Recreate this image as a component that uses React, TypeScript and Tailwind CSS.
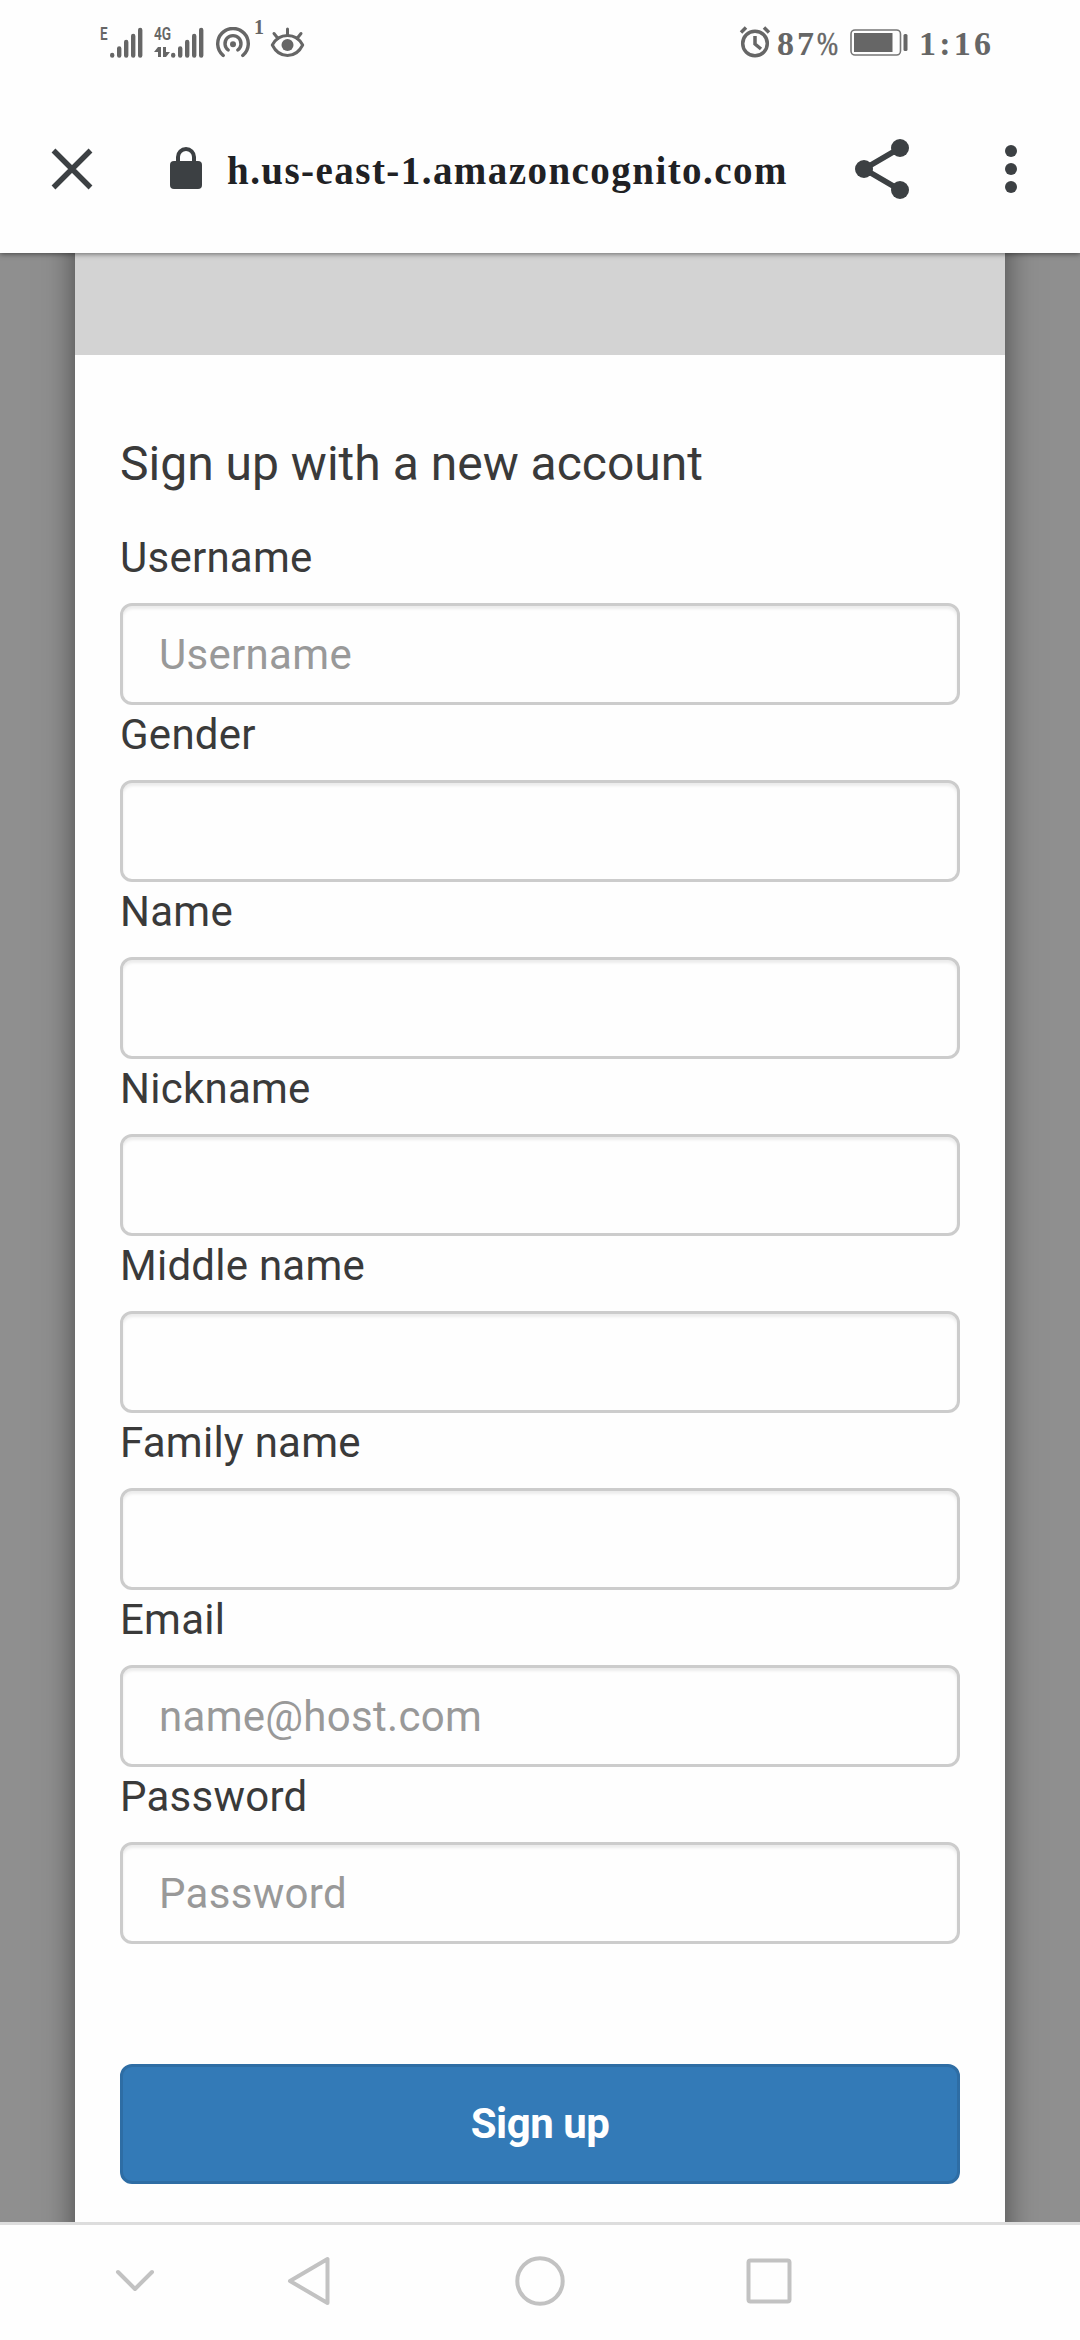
import React from "react";

const fields = [
  { label: "Username", placeholder: "Username", type: "text" },
  { label: "Gender", placeholder: "", type: "text" },
  { label: "Name", placeholder: "", type: "text" },
  { label: "Nickname", placeholder: "", type: "text" },
  { label: "Middle name", placeholder: "", type: "text" },
  { label: "Family name", placeholder: "", type: "text" },
  { label: "Email", placeholder: "name@host.com", type: "email" },
  { label: "Password", placeholder: "Password", type: "password" },
];

function SignalBars() {
  return (
    <svg width="33" height="31" viewBox="0 0 33 31" className="block" stroke="#666" strokeWidth="4.4" strokeLinecap="round">
      <path d="M2.2 28v.6M9.2 21.5v7M16.2 15v13.5M23.2 9v19.5M30.2 3v25.5" />
    </svg>
  );
}

function StatusBar() {
  return (
    <div className="flex h-[84px] items-start text-[#666]">
      <div className="ml-[100px] mt-[25px] w-[10px] font-['Roboto'] text-[18px] font-semibold leading-[17px]">
        <span className="inline-block origin-left scale-x-[0.75]">E</span>
      </div>
      <div className="mt-[27px]"><SignalBars /></div>
      <div className="ml-[11px] mt-[25px] w-[17px] font-['Roboto'] text-[19px] font-semibold leading-[18px]">
        <span className="inline-block origin-left scale-x-[0.72]">4G</span>
        <svg width="16" height="12" viewBox="0 0 16 12" className="mt-[3px] block" fill="#666">
          <path d="M4 1h3v10H4V6H0zM9 1h3v5h4l-4 5H9z" />
        </svg>
      </div>
      <div className="mt-[27px]"><SignalBars /></div>
      <svg width="36" height="32" viewBox="0 0 36 32" className="ml-[11px] mt-[27px]" fill="none" stroke="#666" strokeWidth="3.4" strokeLinecap="round">
        <path d="M8.2 28.5A15.3 15.3 0 1 1 27.8 28.5" />
        <path d="M13.2 23A8 8 0 1 1 22.8 23" />
        <circle cx="18" cy="17.2" r="3" fill="#666" stroke="none" />
      </svg>
      <span className="ml-[3px] mt-[17px] w-[12px] font-['Liberation_Serif'] text-[20px] font-bold leading-[20px]">1</span>
      <svg width="36" height="32" viewBox="0 0 36 32" className="ml-[4px] mt-[27px]" fill="none" stroke="#666" strokeWidth="3" strokeLinecap="round">
        <path d="M2.3 18C6 11 11.5 8.5 17.5 8.5S29 11 32.7 18C29 25.5 23.5 28.5 17.5 28.5S6 25.5 2.3 18Z" strokeLinejoin="round" />
        <circle cx="17.5" cy="18" r="6" fill="#666" stroke="none" />
        <path d="M17.5 2v6M4 6.500l4 5M31 6.500l-4 5" />
      </svg>
      <svg width="34" height="34" viewBox="0 0 34 34" className="ml-[432px] mt-[26px]" fill="none" stroke="#666" strokeWidth="3.5">
        <circle cx="17" cy="17.5" r="12.300" />
        <path d="M17 10v8l6 5" />
        <path d="M3 6.500l5-5M31 6.500l-5-5" strokeLinecap="butt" />
      </svg>
      <b className="ml-[5px] mt-[24px] w-[70px] whitespace-nowrap font-['Liberation_Serif'] text-[34px] leading-[40px]">
        <span className="tracking-[3px]">87</span>
        <span className="inline-block origin-left scale-x-[0.74] font-normal [-webkit-text-stroke:0.6px_#666]">%</span>
      </b>
      <svg width="60" height="28" viewBox="0 0 60 28" className="ml-[3px] mt-[28px]" fill="none">
        <rect x="1" y="2" width="49.5" height="25" rx="4" stroke="#777" strokeWidth="1.6" />
        <rect x="4" y="5" width="38.5" height="19" fill="#666" />
        <rect x="53.5" y="6" width="4" height="17" rx="1.5" fill="#666" />
      </svg>
      <b className="ml-[9px] mt-[24px] font-['Liberation_Serif'] text-[34px] leading-[40px] tracking-[3.2px]">1:16</b>
    </div>
  );
}

function BrowserBar() {
  return (
    <header className="flex h-[169px] items-start">
      <svg width="44" height="44" viewBox="0 0 44 44" className="ml-[50px] mt-[63px]" stroke="#3c4043" strokeWidth="5.4">
        <path d="M3.500 3.500l37 37M40.500 3.500l-37 37" />
      </svg>
      <svg width="32" height="43" viewBox="0 0 32 43" className="ml-[76px] mt-[62px]">
        <path d="M8 17v-6a8 8 0 0 1 16 0v6" fill="none" stroke="#3c4043" strokeWidth="4" />
        <rect y="15" width="32" height="28" rx="4" fill="#3c4043" />
      </svg>
      <div className="ml-[25px] mt-[63px] w-[562px] whitespace-nowrap font-['Liberation_Serif'] text-[39px] font-bold leading-[48px] tracking-[1.45px] text-[#202124]">
        h.us-east-1.amazoncognito.com
      </div>
      <svg width="56" height="62" viewBox="0 0 56 62" className="ml-[64px] mt-[54px]" fill="#3c4043">
        <path d="M47 10L11 31l36 21" fill="none" stroke="#3c4043" strokeWidth="5.5" />
        <circle cx="47" cy="10" r="9" />
        <circle cx="11" cy="31" r="9" />
        <circle cx="47" cy="52" r="9" />
      </svg>
      <svg width="12" height="50" viewBox="0 0 12 50" className="ml-[96px] mt-[60px]" fill="#3c4043">
        <circle cx="6" cy="7" r="6" />
        <circle cx="6" cy="25" r="6" />
        <circle cx="6" cy="43" r="6" />
      </svg>
    </header>
  );
}

function NavigationBar() {
  return (
    <nav className="relative flex h-[118px] items-start border-t-[3px] border-[#ddd] bg-[#fefefe]">
      <svg width="40" height="24" viewBox="0 0 40 24" className="ml-[115px] mt-[44px]" fill="none" stroke="#c2c2c2" strokeWidth="4" strokeLinecap="round" strokeLinejoin="round">
        <path d="M3 3l17 17L37 3" />
      </svg>
      <svg width="44" height="52" viewBox="0 0 44 52" className="ml-[131px] mt-[30px]" fill="none" stroke="#c2c2c2" strokeWidth="4" strokeLinejoin="round">
        <path d="M4 26L41.5 4v44z" />
      </svg>
      <svg width="52" height="52" viewBox="0 0 52 52" className="ml-[184px] mt-[30px]" fill="none" stroke="#c2c2c2" strokeWidth="4">
        <circle cx="26" cy="26" r="22.7" />
      </svg>
      <svg width="46" height="46" viewBox="0 0 46 46" className="ml-[180px] mt-[33px]" fill="none" stroke="#c2c2c2" strokeWidth="4">
        <rect x="2.5" y="2.5" width="41" height="41" rx="2" />
      </svg>
    </nav>
  );
}

export default function App() {
  return (
    <div className="flex h-[2340px] w-[1080px] flex-col overflow-hidden bg-[#fefefe] font-['Roboto',sans-serif] text-[#3a3a3a]">
      <div className="relative z-10 bg-[#fefefe] shadow-[0_1px_5px_rgba(0,0,0,0.5)]">
        <StatusBar />
        <BrowserBar />
      </div>
      <main className="h-[1969px] shrink-0 overflow-hidden bg-[#8f8f8f] px-[75px]">
        <div className="-mt-20 h-[2180px] bg-[#fefefe] pt-20 shadow-[0_0_30px_rgba(0,0,0,0.5)]">
          <div className="-mt-20 h-[182px] bg-[#d3d3d3]" />
          <form className="px-[45px] pt-[75px]">
            <h1 className="whitespace-nowrap text-[48px] leading-[68px]">Sign up with a new account</h1>
            <div className="mt-[26px]">
              {fields.map((f) => (
                <div key={f.label} className="h-[177px]">
                  <label className="block h-[79px] text-[42px] leading-[68px] tracking-[0.25px]">{f.label}</label>
                  <input
                    type={f.type}
                    placeholder={f.placeholder}
                    className="block h-[102px] w-full rounded-[12px] border-[3px] border-[#ccc] bg-[#fefefe] px-[36px] text-[42px] tracking-[0.3px] shadow-[inset_0_3px_3px_rgba(0,0,0,0.075)] placeholder:text-[#999] placeholder:opacity-100"
                  />
                </div>
              ))}
            </div>
            <button type="button" className="mt-[124px] block h-[120px] w-full rounded-[12px] border-[3px] border-[#2e6da4] bg-[#337ab7] pb-[2px] text-[42px] font-bold tracking-[-0.5px] text-white">
              Sign up
            </button>
          </form>
        </div>
      </main>
      <NavigationBar />
    </div>
  );
}
